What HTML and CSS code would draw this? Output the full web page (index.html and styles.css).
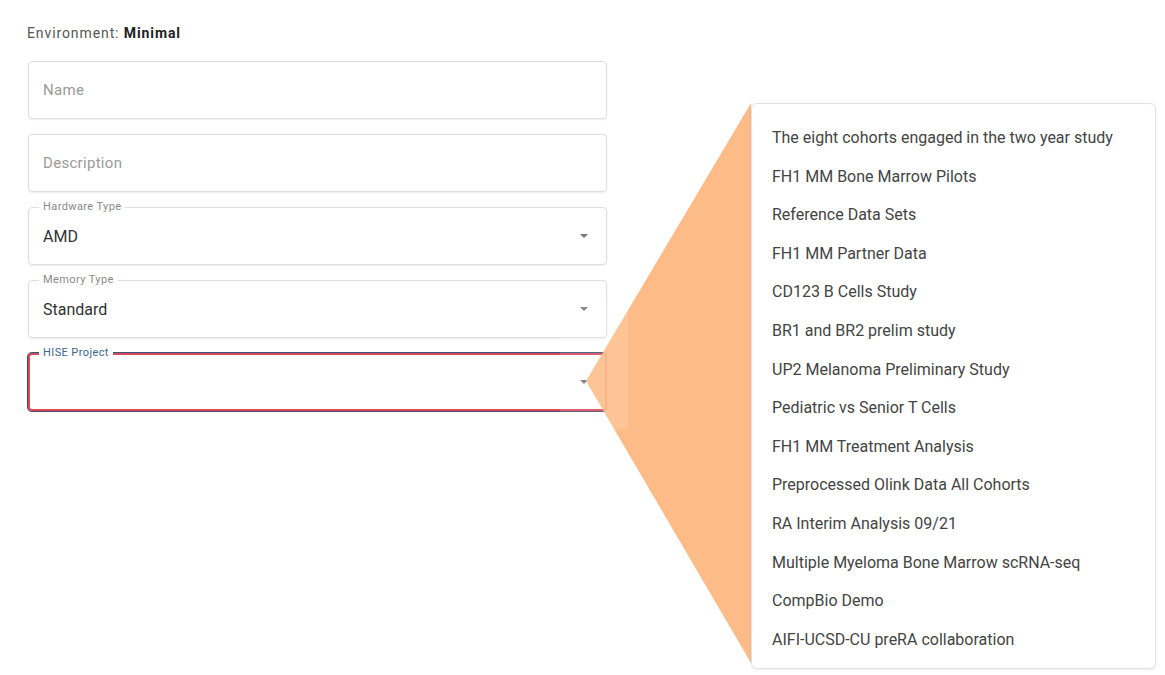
FILE: index.html
```html
<!DOCTYPE html>
<html lang="en">
<head>
    <meta charset="UTF-8">
    <meta name="viewport" content="width=device-width, initial-scale=1.0">
    <title>New Workspace</title>
    <link rel="stylesheet" href="styles.css">
</head>
<body>
    <div class="form">
        <p class="env">Environment: <b>Minimal</b></p>

        <div class="field">
            <span class="placeholder">Name</span>
        </div>
        <div class="field">
            <span class="placeholder">Description</span>
        </div>
        <div class="field select">
            <span class="field-label">Hardware Type</span>
            <span class="value">AMD</span>
            <span class="arrow"></span>
        </div>
        <div class="field select">
            <span class="field-label">Memory Type</span>
            <span class="value">Standard</span>
            <span class="arrow"></span>
        </div>
        <div class="field select error">
            <span class="field-label">HISE Project</span>
            <span class="value"></span>
            <span class="arrow"></span>
        </div>
    </div>

    <svg class="callout" width="1165" height="675" viewBox="0 0 1165 675">
        <polygon points="751,103 586,381 751,663" fill="#fdb57a" fill-opacity="0.9"/>
        <rect x="560" y="300" width="68" height="129" fill="#ffffff" fill-opacity="0.12"/>
    </svg>

    <ul class="menu">
        <li>The eight cohorts engaged in the two year study</li>
        <li>FH1 MM Bone Marrow Pilots</li>
        <li>Reference Data Sets</li>
        <li>FH1 MM Partner Data</li>
        <li>CD123 B Cells Study</li>
        <li>BR1 and BR2 prelim study</li>
        <li>UP2 Melanoma Preliminary Study</li>
        <li>Pediatric vs Senior T Cells</li>
        <li>FH1 MM Treatment Analysis</li>
        <li>Preprocessed Olink Data All Cohorts</li>
        <li>RA Interim Analysis 09/21</li>
        <li>Multiple Myeloma Bone Marrow scRNA-seq</li>
        <li>CompBio Demo</li>
        <li>AIFI-UCSD-CU preRA collaboration</li>
    </ul>
</body>
</html>
```

FILE: styles.css
```css
body {
    margin: 0;
    font-family: Roboto, "Liberation Sans", Arial, sans-serif;
    background: #fff;
    color: #333;
}
.form {
    width: 579px;
    margin-left: 28px;
    padding-top: 24px;
}
.env {
    margin: 0 0 19px -1px;
    font-size: 14px;
    line-height: 18px;
    letter-spacing: 0.9px;
    color: #555;
}
.env b { color: #222; }
.field {
    position: relative;
    box-sizing: border-box;
    height: 58px;
    margin-bottom: 15px;
    padding: 0 14px;
    display: flex;
    align-items: center;
    justify-content: space-between;
    border: 1px solid #dedede;
    border-radius: 4px;
    box-shadow: 0 1px 2px rgba(0, 0, 0, 0.07);
}
.placeholder {
    font-size: 15px;
    letter-spacing: 0.3px;
    color: #9a9a9a;
}
.value {
    font-size: 16px;
    color: #333;
}
.field-label {
    position: absolute;
    top: -7px;
    left: 10px;
    padding: 0 4px;
    background: #fff;
    font-size: 11px;
    line-height: 12px;
    letter-spacing: 0.4px;
    color: #8a8a8a;
}
.arrow {
    width: 0;
    height: 0;
    margin-right: 4px;
    border-left: 4px solid transparent;
    border-right: 4px solid transparent;
    border-top: 4px solid #777;
}
.error {
    border: 2px solid #d8475a;
    box-shadow: 0 -1px 0 #35587c, -1px 0 0 #3a4a66, 0 1px 0 #4a4a70;
    padding: 0 13px;
}
.error .field-label {
    top: -8px;
    left: 9px;
    color: #3d6590;
}
.callout {
    position: absolute;
    left: 0;
    top: 0;
    pointer-events: none;
}
.menu {
    position: absolute;
    left: 751px;
    top: 103px;
    width: 405px;
    box-sizing: border-box;
    margin: 0;
    padding: 15px 0 9px;
    list-style: none;
    background: #fff;
    border: 1px solid #e2e2e2;
    border-radius: 6px;
    box-shadow: 0 1px 3px rgba(0, 0, 0, 0.08);
}
.menu li {
    height: 38.6px;
    line-height: 38.6px;
    padding-left: 20px;
    font-size: 16px;
    color: #444;
    white-space: nowrap;
}
```
